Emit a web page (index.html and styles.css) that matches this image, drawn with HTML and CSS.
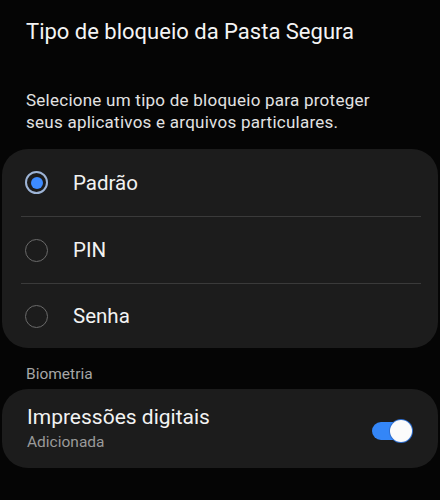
FILE: index.html
```html
<!DOCTYPE html>
<html lang="pt-BR">
<head>
    <meta charset="UTF-8">
    <title>Tipo de bloqueio da Pasta Segura</title>
    <link rel="stylesheet" href="styles.css">
</head>
<body>
    <div class="page">
        <h1 class="title">Tipo de bloqueio da Pasta Segura</h1>
        <p class="desc">Selecione um tipo de bloqueio para proteger seus aplicativos e arquivos particulares.</p>

        <ul class="card options">
            <li class="option selected"><span class="radio"></span><span class="label">Padrão</span></li>
            <li class="option"><span class="radio"></span><span class="label">PIN</span></li>
            <li class="option"><span class="radio"></span><span class="label">Senha</span></li>
        </ul>

        <div class="section">Biometria</div>

        <div class="card bio">
            <div class="bio-text">
                <div class="bio-name">Impressões digitais</div>
                <div class="bio-sub">Adicionada</div>
            </div>
            <span class="switch on"><span class="knob"></span></span>
        </div>
    </div>
</body>
</html>
```

FILE: styles.css
```css
*{
    margin:0;
    padding:0;
    box-sizing:border-box;
}
li{
    list-style:none;
}
body{
    background:#050505;
    color:#f2f2f2;
    font-family:Roboto,"Noto Sans",sans-serif;
    width:440px;
    height:500px;
    overflow:hidden;
}
.page{
    padding-top:17px;
}
.title{
    font-size:22px;
    font-weight:400;
    line-height:30px;
    padding-left:26px;
    color:#f4f4f4;
}
.desc{
    margin-top:42px;
    padding-left:26px;
    max-width:400px;
    font-size:17px;
    letter-spacing:0.25px;
    line-height:22px;
    color:#e2e2e2;
}
.card{
    background:#1c1c1c;
    border-radius:26px;
    margin:16px 2px 0;
}
.option{
    height:67px;
    display:flex;
    align-items:center;
    padding-left:23px;
}
.option + .option{
    border-top:1px solid #3a3a3a;
    border-image:linear-gradient(to right,transparent 20px,#3a3a3a 20px,#3a3a3a calc(100% - 18px),transparent calc(100% - 18px)) 1;
}
.option:last-child{
    height:65px;
}
.radio{
    width:23px;
    height:23px;
    border-radius:50%;
    border:1.5px solid #6a6a6a;
    display:flex;
    align-items:center;
    justify-content:center;
    flex-shrink:0;
}
.selected .radio{
    border:2px solid #9db4d6;
}
.selected .radio::after{
    content:"";
    width:12px;
    height:12px;
    border-radius:50%;
    background:#3d8bff;
}
.label{
    margin-left:25px;
    font-size:20.5px;
    color:#f2f2f2;
}
.section{
    padding-left:26px;
    margin-top:16px;
    font-size:15.5px;
    line-height:20px;
    color:#a6a6a6;
}
.bio{
    margin-top:5px;
    height:79px;
    display:flex;
    align-items:center;
    justify-content:space-between;
    padding:0 27px 0 25px;
}
.bio-name{
    font-size:21px;
    line-height:25px;
    color:#f2f2f2;
}
.bio-sub{
    margin-top:2px;
    font-size:15.5px;
    line-height:20px;
    color:#9a9a9a;
}
.switch{
    width:39px;
    height:18px;
    border-radius:9px;
    background:#3486f7;
    position:relative;
    margin-top:4px;
}
.knob{
    position:absolute;
    right:-1px;
    top:-2px;
    width:22px;
    height:22px;
    border-radius:50%;
    background:#fbfbfb;
    box-shadow:0 0 0 1px #2f6fd0;
}
```
